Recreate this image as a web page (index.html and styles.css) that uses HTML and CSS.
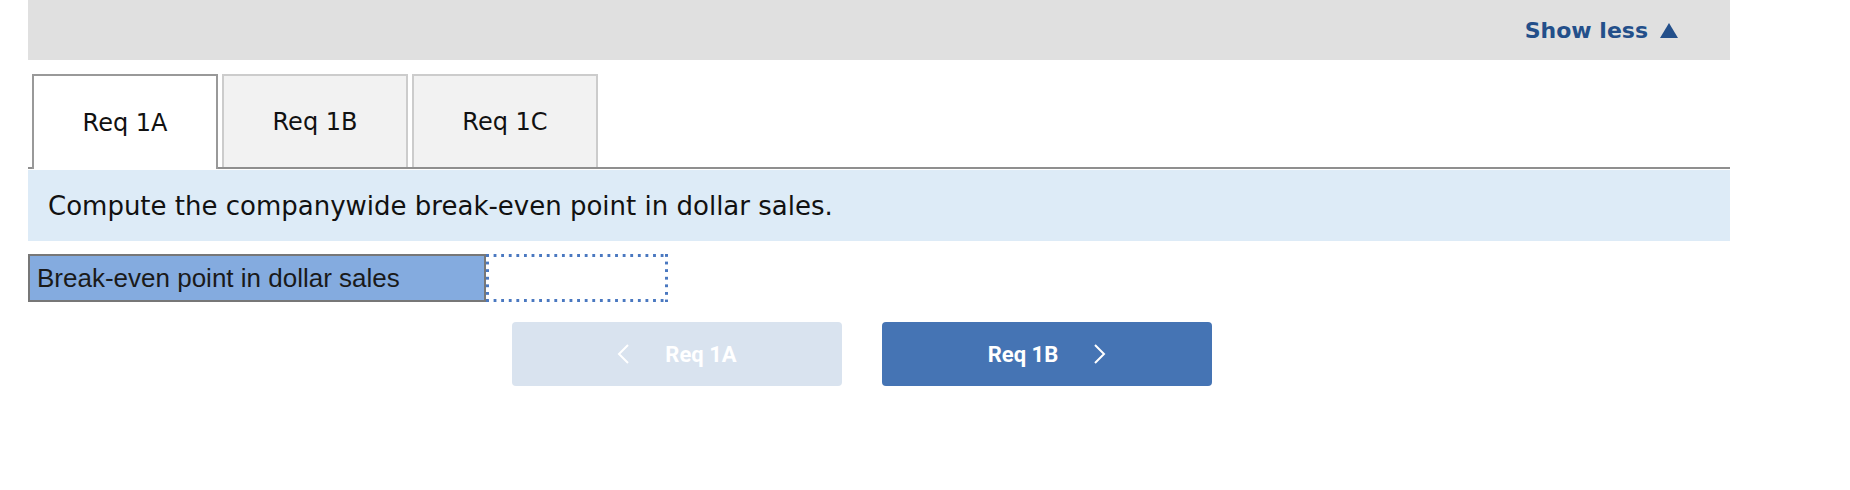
FILE: index.html
```html
<!DOCTYPE html>
<html lang="en">
<head>
<meta charset="utf-8">
<title>Break-even</title>
<link rel="stylesheet" href="styles.css">
</head>
<body>
<div class="page">
  <div class="topbar">
    <a class="toggle" href="#">Show less
      <svg class="tri" width="18" height="15" viewBox="0 0 18 15"><polygon points="9,0 18,15 0,15" fill="#234f8a"/></svg>
    </a>
  </div>
  <div class="tabs">
    <div class="tab active">Req 1A</div>
    <div class="tab">Req 1B</div>
    <div class="tab">Req 1C</div>
  </div>
  <div class="prompt">Compute the companywide break-even point in dollar sales.</div>
  <div class="answer-row">
    <div class="label">Break-even point in dollar sales</div>
    <div class="input"></div>
  </div>
  <div class="nav">
    <button class="btn prev" type="button">
      <svg class="chev" width="13" height="20" viewBox="0 0 13 20"><polyline points="11,1 2,10 11,19" fill="none" stroke="#fff" stroke-width="2"/></svg>
      <span>Req 1A</span>
    </button>
    <button class="btn next" type="button">
      <span>Req 1B</span>
      <svg class="chev" width="13" height="20" viewBox="0 0 13 20"><polyline points="2,1 11,10 2,19" fill="none" stroke="#fff" stroke-width="2"/></svg>
    </button>
  </div>
</div>
</body>
</html>
```
FILE: styles.css
```css
html, body {
  margin: 0;
  padding: 0;
  background: #fff;
}

.page {
  margin-left: 28px;
  width: 1702px;
  font-family: "DejaVu Sans", Verdana, sans-serif;
  color: #111;
}

.topbar {
  height: 60px;
  background: #e0e0e0;
  display: flex;
  justify-content: flex-end;
  align-items: center;
  padding-right: 52px;
  box-sizing: border-box;
}

.toggle {
  display: flex;
  align-items: center;
  gap: 12px;
  font-weight: bold;
  font-size: 22px;
  color: #234f8a;
  text-decoration: none;
}

.tabs {
  margin-top: 14px;
  display: flex;
  align-items: flex-end;
  gap: 4px;
  padding-left: 4px;
  height: 95px;
  box-sizing: border-box;
  border-bottom: 2px solid #8f8f8f;
}

.tab {
  width: 186px;
  height: 93px;
  box-sizing: border-box;
  border: 2px solid #cccccc;
  border-bottom: none;
  background: #f2f2f2;
  display: flex;
  align-items: center;
  justify-content: center;
  font-size: 24px;
  color: #111;
}

.tab.active {
  height: 95px;
  margin-bottom: -2px;
  background: #fff;
  border-color: #999999;
}

.prompt {
  margin-top: 1px;
  height: 71px;
  background: #ddebf7;
  display: flex;
  align-items: center;
  padding-left: 20px;
  font-size: 26px;
  color: #111;
}

.answer-row {
  margin-top: 13px;
  display: flex;
  height: 48px;
}

.label {
  width: 458px;
  box-sizing: border-box;
  border: 2px solid #777777;
  background: #84abdf;
  display: flex;
  align-items: center;
  padding-left: 7px;
  font-family: "Liberation Sans", Arial, sans-serif;
  font-size: 26px;
  color: #1a1a1a;
}

.input {
  width: 182px;
  box-sizing: border-box;
  background:
    linear-gradient(to right, #4a78c0 3px, transparent 3px) left top / 7.6px 3px repeat-x,
    linear-gradient(to right, #4a78c0 3px, transparent 3px) left bottom / 7.6px 3px repeat-x,
    linear-gradient(to bottom, #4a78c0 3px, transparent 3px) left top / 3px 7.6px repeat-y,
    linear-gradient(to bottom, #4a78c0 3px, transparent 3px) right top / 3px 7.6px repeat-y,
    #fff;
}

.nav {
  margin-top: 20px;
  display: flex;
  gap: 40px;
  padding-left: 484px;
}

.btn {
  width: 330px;
  height: 64px;
  border: none;
  border-radius: 4px;
  display: flex;
  align-items: center;
  justify-content: center;
  gap: 35px;
  font-family: Roboto, "Liberation Sans", sans-serif;
  font-weight: 700;
  font-size: 22px;
  color: #fff;
  padding: 0;
}

.btn.prev {
  background: #d9e3ef;
}

.btn.next {
  background: #4574b4;
}

.chev {
  display: block;
}
```
